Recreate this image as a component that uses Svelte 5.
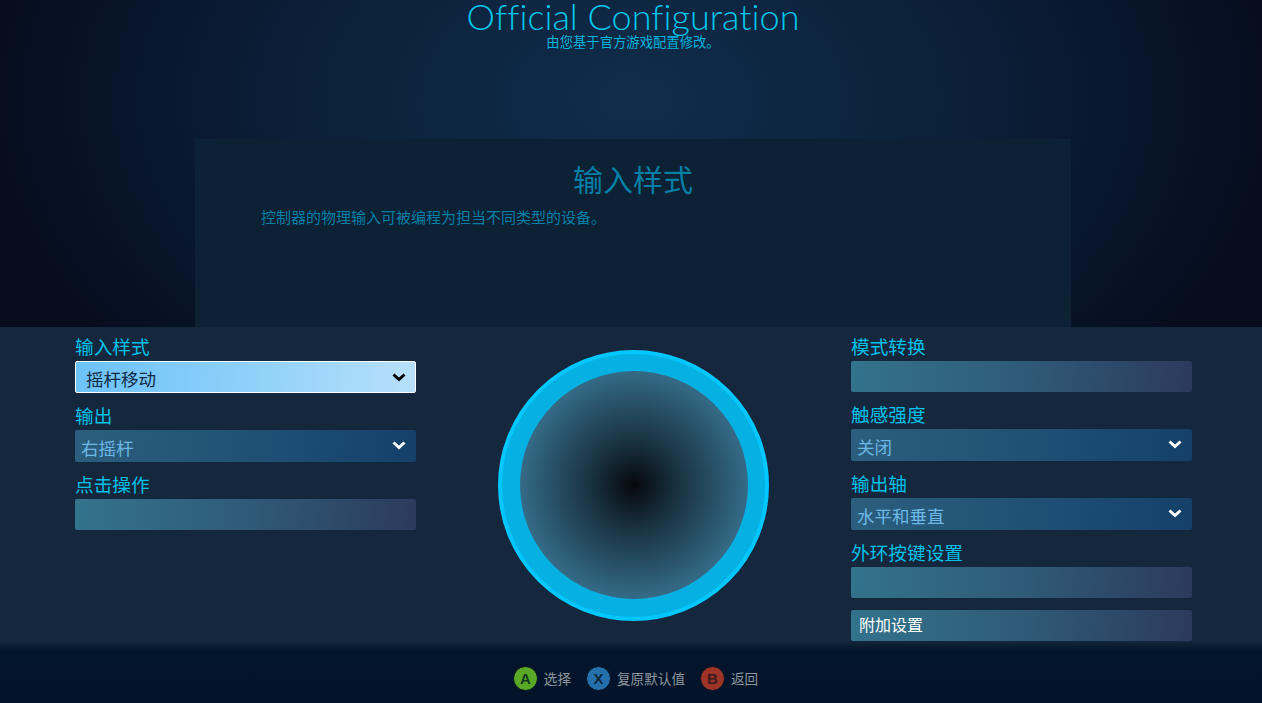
<script>
	const leftFields = [
		{ label: '输入样式', value: '摇杆移动', dropdown: true, selected: true },
		{ label: '输出', value: '右摇杆', dropdown: true },
		{ label: '点击操作' }
	];
	const rightFields = [
		{ label: '模式转换' },
		{ label: '触感强度', value: '关闭', dropdown: true },
		{ label: '输出轴', value: '水平和垂直', dropdown: true },
		{ label: '外环按键设置' }
	];
	const hints = [
		{ key: 'A', text: '选择', cls: 'green' },
		{ key: 'X', text: '复原默认值', cls: 'blue' },
		{ key: 'B', text: '返回', cls: 'red' }
	];
</script>

{#snippet field(f)}
	<div class="field">
		<div class="label">{f.label}</div>
		{#if f.dropdown}
			<div class="box dropdown" class:selected={f.selected}>
				<span>{f.value}</span>
				<svg width="14" height="10" viewBox="0 0 14 10" fill="none" stroke="currentColor" stroke-width="3"><path d="M1.5 2.500l5.500 5 5.500-5"/></svg>
			</div>
		{:else}
			<div class="box empty"></div>
		{/if}
	</div>
{/snippet}

<div class="page">
	<section class="top">
		<header>
			<h1>Official Configuration</h1>
			<p>由您基于官方游戏配置修改。</p>
		</header>
		<div class="info">
			<h2>输入样式</h2>
			<p>控制器的物理输入可被编程为担当不同类型的设备。</p>
		</div>
	</section>

	<section class="controls">
		<div class="column">
			{#each leftFields as f}
				{@render field(f)}
			{/each}
		</div>

		<div class="ring">
			<div class="pad"></div>
		</div>

		<div class="column">
			{#each rightFields as f}
				{@render field(f)}
			{/each}
			<div class="box empty extra">附加设置</div>
		</div>
	</section>

	<footer>
		{#each hints as h}
			<div class="hint">
				<span class="key {h.cls}">{h.key}</span>
				<span>{h.text}</span>
			</div>
		{/each}
	</footer>
</div>

<style>
	:global(body) {
		background: #14273c;
	}

	.page {
		width: 1262px;
		height: 703px;
		overflow: hidden;
		display: flex;
		flex-direction: column;
		font-family: "Noto Sans CJK SC", "Noto Sans", sans-serif;
	}

	.top {
		height: 327px;
		flex-shrink: 0;
		box-sizing: border-box;
		padding-left: 4px;
		display: flex;
		flex-direction: column;
		align-items: center;
		background: radial-gradient(ellipse 640px 420px at 633px 100px, #0f2d4b 0%, #0b1f38 55%, #060d1f 100%);
	}

	header {
		height: 139px;
		flex-shrink: 0;
		text-align: center;
		color: #00c6ea;
	}

	h1 {
		margin: 0;
		font-family: "Lato", sans-serif;
		font-weight: 300;
		font-size: 36px;
		line-height: 32px;
		font-variant-ligatures: none;
		white-space: nowrap;
	}

	header p {
		margin: 3px 0 0;
		font-size: 13.33px;
		line-height: 14px;
		color: #00b4dc;
	}

	.info {
		width: 876px;
		flex: 1;
		background: #0c2134;
		color: #037fa5;
		box-sizing: border-box;
		padding: 18px 66px 0;
	}

	h2 {
		margin: 0;
		font-weight: 400;
		font-size: 30px;
		line-height: 42px;
		text-align: center;
	}

	.info p {
		margin: 8px 0 0;
		font-size: 15px;
		line-height: 20px;
	}

	.controls {
		flex: 1;
		display: flex;
		gap: 82px;
		padding-left: 75px;
		background: #14273c;
	}

	.column {
		width: 341px;
	}

	.field {
		margin-bottom: 3px;
	}

	.label {
		height: 34px;
		line-height: 37px;
		font-size: 18.67px;
		color: #00c0e8;
	}

	.box {
		box-sizing: border-box;
		border-radius: 2px;
	}

	.empty {
		height: 31px;
		background: linear-gradient(95deg, #33738c 0%, #2f5b78 50%, #2c3a5c 100%);
	}

	.dropdown {
		height: 32px;
		display: flex;
		align-items: center;
		justify-content: space-between;
		padding: 0 10px 0 6px;
		font-size: 17.5px;
		color: #6cb8e6;
		background: linear-gradient(95deg, #2b5f7d 0%, #1f5074 55%, #14406a 100%);
	}

	.dropdown span {
		position: relative;
		top: 1px;
	}

	.dropdown svg {
		color: #fff;
		margin-bottom: 2px;
	}

	.selected {
		border: 1px solid #fff;
		padding: 0 9px 0 10px;
		color: #0f2a45;
		background: linear-gradient(95deg, #6cc2f8 0%, #8ed0f9 50%, #b8e0fb 100%);
	}

	.selected svg {
		color: #000;
		margin-bottom: 0;
	}

	.extra {
		margin-top: 12px;
		padding-left: 8px;
		font-size: 16px;
		line-height: 29px;
		color: #fff;
	}

	.ring {
		width: 271px;
		height: 271px;
		flex-shrink: 0;
		margin-top: 23px;
		box-sizing: border-box;
		border: 4px solid #00c8ff;
		border-radius: 50%;
		background: #05b0e3;
		display: flex;
		align-items: center;
		justify-content: center;
	}

	.pad {
		width: 228px;
		height: 228px;
		margin-bottom: 1px;
		border-radius: 50%;
		background: radial-gradient(circle closest-side, #06090d 0%, #1a3443 40%, #2c5a73 82%, #356b87 100%);
	}

	footer {
		height: 62px;
		margin-top: -2px;
		position: relative;
		flex-shrink: 0;
		display: flex;
		align-items: center;
		justify-content: center;
		gap: 15px;
		padding: 12px 0 0 9px;
		box-sizing: border-box;
		font-size: 13.6px;
		color: #8d969e;
		background: linear-gradient(180deg, #14273c 0%, #03152a 9px, #03142a 100%);
	}

	.hint {
		display: flex;
		align-items: center;
		gap: 6px;
	}

	.key {
		width: 25px;
		height: 25px;
		box-sizing: border-box;
		padding-top: 1px;
		border: 1px solid #07121f;
		border-radius: 50%;
		display: flex;
		align-items: center;
		justify-content: center;
		font-family: "Liberation Sans", sans-serif;
		font-weight: 700;
		font-size: 15px;
		color: #10283a;
	}

	.green { background: #59a826; color: #143a20; }
	.blue { background: #2370ad; }
	.red { background: #9e3328; color: #3a1a1c; }
</style>
